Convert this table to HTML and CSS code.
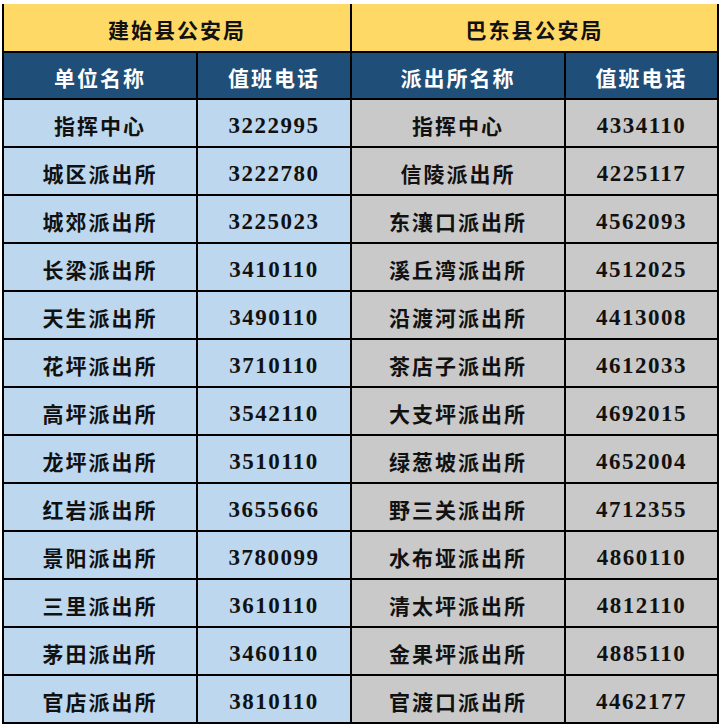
FILE: index.html
```html
<!DOCTYPE html>
<html lang="zh">
<head>
<meta charset="utf-8">
<link rel="stylesheet" href="styles.css">
</head>
<body>
<div class="sheet">
  <div class="cell top span2">建始县公安局</div>
  <div class="cell top span2">巴东县公安局</div>
  <div class="cell head">单位名称</div>
  <div class="cell head">值班电话</div>
  <div class="cell head">派出所名称</div>
  <div class="cell head">值班电话</div>

  <div class="cell blue cn">指挥中心</div><div class="cell blue num">3222995</div><div class="cell gray cn">指挥中心</div><div class="cell gray num">4334110</div>
  <div class="cell blue cn">城区派出所</div><div class="cell blue num">3222780</div><div class="cell gray cn">信陵派出所</div><div class="cell gray num">4225117</div>
  <div class="cell blue cn">城郊派出所</div><div class="cell blue num">3225023</div><div class="cell gray cn">东瀼口派出所</div><div class="cell gray num">4562093</div>
  <div class="cell blue cn">长梁派出所</div><div class="cell blue num">3410110</div><div class="cell gray cn">溪丘湾派出所</div><div class="cell gray num">4512025</div>
  <div class="cell blue cn">天生派出所</div><div class="cell blue num">3490110</div><div class="cell gray cn">沿渡河派出所</div><div class="cell gray num">4413008</div>
  <div class="cell blue cn">花坪派出所</div><div class="cell blue num">3710110</div><div class="cell gray cn">茶店子派出所</div><div class="cell gray num">4612033</div>
  <div class="cell blue cn">高坪派出所</div><div class="cell blue num">3542110</div><div class="cell gray cn">大支坪派出所</div><div class="cell gray num">4692015</div>
  <div class="cell blue cn">龙坪派出所</div><div class="cell blue num">3510110</div><div class="cell gray cn">绿葱坡派出所</div><div class="cell gray num">4652004</div>
  <div class="cell blue cn">红岩派出所</div><div class="cell blue num">3655666</div><div class="cell gray cn">野三关派出所</div><div class="cell gray num">4712355</div>
  <div class="cell blue cn">景阳派出所</div><div class="cell blue num">3780099</div><div class="cell gray cn">水布垭派出所</div><div class="cell gray num">4860110</div>
  <div class="cell blue cn">三里派出所</div><div class="cell blue num">3610110</div><div class="cell gray cn">清太坪派出所</div><div class="cell gray num">4812110</div>
  <div class="cell blue cn">茅田派出所</div><div class="cell blue num">3460110</div><div class="cell gray cn">金果坪派出所</div><div class="cell gray num">4885110</div>
  <div class="cell blue cn">官店派出所</div><div class="cell blue num">3810110</div><div class="cell gray cn">官渡口派出所</div><div class="cell gray num">4462177</div>
</div>
</body>
</html>
```

FILE: styles.css
```css
html, body {
  margin: 0;
  padding: 0;
  background: #ffffff;
}

.sheet {
  display: grid;
  grid-template-columns: 192px 152px 212px 151px;
  grid-template-rows: 47px 45px repeat(13, 46px);
  gap: 2px;
  background: #000000;
  padding: 0 2px 2px 2px;
  margin: 4px 0 0 2px;
  width: max-content;
}

.cell {
  display: flex;
  align-items: center;
  justify-content: center;
  font-family: "Noto Sans CJK SC", "Noto Sans", sans-serif;
  font-weight: 700;
  font-size: 21px;
  letter-spacing: 2px;
  color: #111111;
  padding-top: 4px;
  box-sizing: border-box;
}

.span2 {
  grid-column: span 2;
}

.top {
  background: #ffd966;
  padding-top: 2px;
}

.head {
  background: #1f4e79;
  color: #ffffff;
  padding-top: 2px;
}

.blue {
  background: #bdd7ee;
}

.gray {
  background: #c9c9c9;
}

.num {
  font-family: "Liberation Serif", "Times New Roman", serif;
  font-size: 23px;
  letter-spacing: 1.5px;
  padding-top: 6px;
}
```
